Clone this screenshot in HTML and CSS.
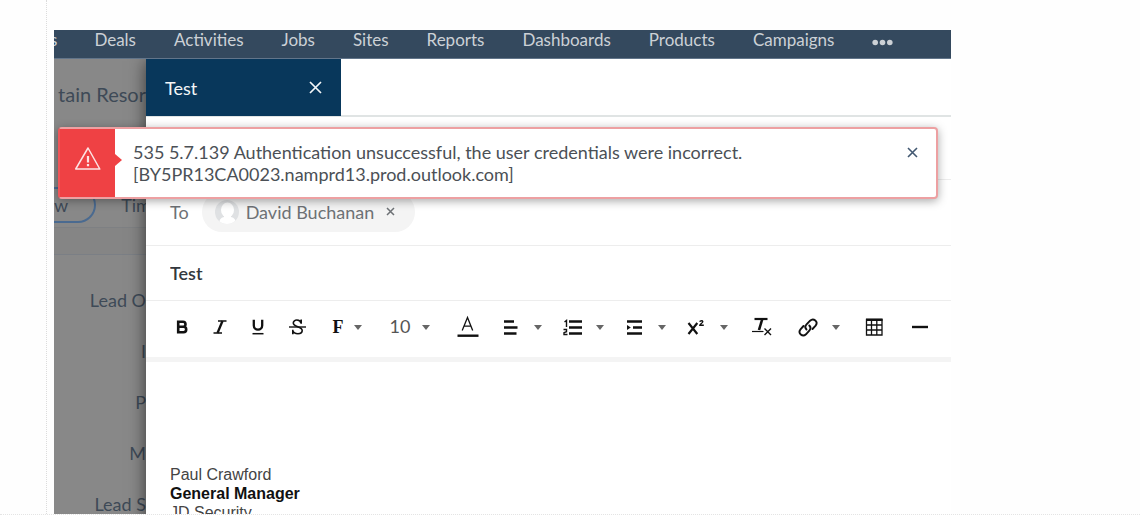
FILE: index.html
```html
<!DOCTYPE html>
<html lang="en">
<head>
<meta charset="utf-8">
<title>Compose email</title>
<link rel="stylesheet" href="styles.css">
</head>
<body>
<div class="page">
  <div class="gutter"></div>
  <div class="app">
    <nav class="nav">
      <a href="#">s</a>
      <a href="#">Deals</a>
      <a href="#">Activities</a>
      <a href="#">Jobs</a>
      <a href="#">Sites</a>
      <a href="#">Reports</a>
      <a href="#">Dashboards</a>
      <a href="#">Products</a>
      <a href="#">Campaigns</a>
      <button class="more" type="button" aria-label="More">
        <svg width="21" height="7" viewBox="0 0 21 7" fill="currentColor"><circle cx="3.2" cy="3.5" r="2.8"/><circle cx="10.5" cy="3.5" r="2.8"/><circle cx="17.8" cy="3.5" r="2.8"/></svg>
      </button>
    </nav>
    <div class="workspace">
      <aside class="record">
        <div class="record-title">tain Resor</div>
        <div class="record-tabs">
          <button class="pill" type="button">w</button>
          <a class="tab-link" href="#">Tim</a>
        </div>
        <div class="record-band"></div>
        <div class="record-fields">
          <span>Lead O</span>
          <span>I</span>
          <span>P</span>
          <span>M</span>
          <span>Lead S</span>
        </div>
      </aside>
      <main class="composer">
        <div class="tabs">
          <div class="tab">
            <span>Test</span>
            <button type="button" aria-label="Close tab">
              <svg width="13" height="13" viewBox="0 0 13 13" fill="none" stroke="currentColor" stroke-width="1.7"><path d="M1 1l11 11M12 1L1 12"/></svg>
            </button>
          </div>
        </div>
        <div class="row from"></div>
        <div class="row to">
          <span class="row-label">To</span>
          <span class="chip">
            <svg width="24" height="24" viewBox="0 0 24 24"><defs><clipPath id="face"><circle cx="12" cy="12" r="12"/></clipPath></defs><circle cx="12" cy="12" r="12" fill="#dfe1e3"/><g fill="#fff" clip-path="url(#face)"><ellipse cx="12.500" cy="10" rx="6.500" ry="7.500"/><path d="M9 14h7v3q5 1 5 7H4q0-6 5-7z"/></g></svg>
            <span>David Buchanan</span>
            <button type="button" aria-label="Remove David Buchanan">
              <svg width="9" height="9" viewBox="0 0 9 9" fill="none" stroke="currentColor" stroke-width="1.5"><path d="M1 1l7 7M8 1L1 8"/></svg>
            </button>
          </span>
        </div>
        <input class="subject" type="text" value="Test" aria-label="Subject">
        <div class="toolbar">
          <div class="group tight">
            <button type="button" aria-label="Bold"><svg width="24" height="24" viewBox="0 0 24 24" fill="none" stroke="currentColor" stroke-width="2.6"><path d="M8.200 6.800h4.800a2.400 2.400 0 0 1 0 5H8.200zM8.200 11.800h5.300a2.700 2.700 0 0 1 0 5.400H8.200z"/></svg></button>
            <button type="button" aria-label="Italic"><svg width="24" height="24" viewBox="0 0 24 24" fill="none" stroke="currentColor"><path d="M10 6h8.500M5.500 18h8.500" stroke-width="1.4"/><path d="M14.500 6l-5 12" stroke-width="2.3"/></svg></button>
            <button type="button" aria-label="Underline"><svg width="24" height="24" viewBox="0 0 24 24" fill="none" stroke="currentColor"><path d="M7.800 4.800v5.700a4.200 4.200 0 0 0 8.400 0V4.800" stroke-width="2.300"/><path d="M6.500 18.700h11" stroke-width="1.500"/></svg></button>
            <button type="button" aria-label="Strikethrough"><svg width="24" height="24" viewBox="0 0 24 24" fill="none" stroke="currentColor"><path d="M17.200 4.500v4.300M17 8.200C16.300 4 9.300 4 9.300 8.100c0 4.300 8.900 3.200 8.900 7.500 0 4.200-8.200 4-9.400.2M8.800 14.700v4.600" stroke-width="1.600"/><path d="M5 12h17" stroke-width="1.400"/></svg></button>
          </div>
          <div class="group wide">
            <button class="font" type="button" aria-label="Font"><span class="serif">F</span><svg width="8" height="5" viewBox="0 0 8 5" fill="#666"><path d="M0 0h8L4 5z"/></svg></button>
            <label class="size"><select aria-label="Font size"><option>10</option></select><svg width="8" height="5" viewBox="0 0 8 5" fill="#666"><path d="M0 0h8L4 5z"/></svg></label>
            <button type="button" aria-label="Text color"><svg width="24" height="24" viewBox="0 0 24 24" fill="none" stroke="currentColor"><path d="M6.200 15.500L11.500 2.500l5.200 13M8 11.200h7" stroke-width="1.300"/><path d="M1.500 20.700h21" stroke-width="2.400"/></svg></button>
          </div>
          <div class="group">
            <button class="split" type="button" aria-label="Align"><svg width="24" height="24" viewBox="0 0 24 24" fill="none" stroke="currentColor" stroke-width="2.400"><path d="M6 6.500h10M6 12.500h13.500M6 18.500h12.500"/></svg><svg width="8" height="5" viewBox="0 0 8 5" fill="#666"><path d="M0 0h8L4 5z"/></svg></button>
            <button class="split" type="button" aria-label="Numbered list"><svg width="24" height="24" viewBox="0 0 24 24" fill="none" stroke="currentColor"><path d="M9 6.500h13M9 12.500h13M9 18.500h13" stroke-width="2.400"/><path d="M4.500 7L6.500 5.500v6.500M3.500 14.500h3v2.200l-2.500 1v1.800h3.500" stroke-width="1.400"/></svg><svg width="8" height="5" viewBox="0 0 8 5" fill="#666"><path d="M0 0h8L4 5z"/></svg></button>
            <button class="split" type="button" aria-label="Indent"><svg width="24" height="24" viewBox="0 0 24 24" fill="none" stroke="currentColor" stroke-width="2.400"><path d="M5 6.500h15M11 12.500h9M5 18.500h15"/><path d="M5 10L8.800 12.500 5 15z" fill="currentColor" stroke="none"/></svg><svg width="8" height="5" viewBox="0 0 8 5" fill="#666"><path d="M0 0h8L4 5z"/></svg></button>
            <button class="split" type="button" aria-label="Superscript"><svg width="24" height="24" viewBox="0 0 24 24" fill="none" stroke="currentColor"><path d="M4.500 8l8.800 11M13.300 8L4.500 19" stroke-width="2.200"/><path d="M15.500 6.500q2.800-1.500 3.300 0c.3 1.500-3 2.300-3 3.800h4" stroke-width="1.400"/></svg><svg width="8" height="5" viewBox="0 0 8 5" fill="#666"><path d="M0 0h8L4 5z"/></svg></button>
          </div>
          <div class="group loose">
            <button type="button" aria-label="Clear formatting"><svg width="24" height="24" viewBox="0 0 24 24" fill="none" stroke="currentColor"><path d="M4.500 4h13" stroke-width="2.200"/><path d="M12.300 4L9 15" stroke-width="2.600"/><path d="M2 16.500h11.500" stroke-width="1.200"/><path d="M14.500 13.500l6.500 6.500M21 13.500L14.500 20" stroke-width="1.400"/></svg></button>
            <button class="split" type="button" aria-label="Link"><svg width="24" height="24" viewBox="0 0 24 24" fill="none" stroke="currentColor" stroke-width="1.900" stroke-linecap="round"><path d="M10.500 14.500c-1.800-1.800-1.500-3.500-.2-4.800l3.800-4c3.500-3.200 8.500 1.200 5.500 5L16.500 14"/><path d="M13.300 10.500c1.800 1.800 1.500 3.500.2 4.800L10 19.300c-3.500 3.200-8.500-1.200-5.500-5L7.500 11"/></svg><svg width="8" height="5" viewBox="0 0 8 5" fill="#666"><path d="M0 0h8L4 5z"/></svg></button>
            <button type="button" aria-label="Table"><svg width="24" height="24" viewBox="0 0 24 24" fill="none" stroke="currentColor" stroke-width="1.300"><path d="M4.500 4.500h15.500v15.500H4.500zM4.500 10h15.500M4.500 15h15.500M9.500 6v14M14.800 6v14"/><path d="M4 4.800h16.500" stroke-width="2.400"/></svg></button>
            <button type="button" aria-label="Horizontal line"><svg width="24" height="24" viewBox="0 0 24 24" fill="none" stroke="currentColor" stroke-width="2.400"><path d="M4 12h16"/></svg></button>
          </div>
        </div>
        <div class="message">
          <div>Paul Crawford</div>
          <strong>General Manager</strong>
          <div>JD Security</div>
        </div>
      </main>
      <div class="alert" role="alert">
        <div class="alert-icon">
          <svg width="28" height="26" viewBox="0 0 28 26" fill="none" stroke="currentColor"><path d="M14 2L25.800 23H1.700z" stroke-width="1.500" stroke-linejoin="round"/><path d="M14 10v6.500M14 18v2.200" stroke-width="2.200"/></svg>
        </div>
        <p>535 5.7.139 Authentication unsuccessful, the user credentials were incorrect.<br>[BY5PR13CA0023.namprd13.prod.outlook.com]</p>
        <button type="button" aria-label="Dismiss">
          <svg width="11" height="11" viewBox="0 0 11 11" fill="none" stroke="currentColor" stroke-width="1.600"><path d="M1 1l9 9M10 1l-9 9"/></svg>
        </button>
      </div>
    </div>
  </div>
</div>
</body>
</html>
```
FILE: styles.css
```css
* { box-sizing: border-box; }
body {
  margin: 0;
  background: #fefefe;
  font-family: Lato, "Liberation Sans", sans-serif;
  font-size: 18px;
  color: #4b5056;
}
a { color: inherit; text-decoration: none; }
svg { display: block; flex: none; }
button {
  border: 0;
  padding: 0;
  background: none;
  color: inherit;
  font: inherit;
}
.page {
  display: grid;
  grid-template-columns: 47px 1fr;
  column-gap: 7px;
  height: 100vh;
  padding-right: 189px;
  border-bottom: 1px dotted #e4e4e4;
}
.gutter { border-right: 1px dotted #dcdcdc; }
.app {
  display: flex;
  flex-direction: column;
  margin-top: 30px;
  min-width: 0;
  overflow: hidden;
}
.nav {
  position: relative;
  z-index: 1;
  display: flex;
  gap: 38px;
  height: 29px;
  flex: none;
  margin-left: -4px;
  background: #34495e;
  border-bottom: 1px solid #62758a;
  color: #ccd1d6;
  font-size: 17px;
  line-height: 20px;
}
.nav a:first-child { margin-right: -1px; }
.more { align-self: flex-start; padding-top: 9px; }
.workspace {
  position: relative;
  display: grid;
  grid-template-columns: 92px 1fr;
  flex: 1;
  min-height: 0;
}
.record {
  background: #888;
  color: #3e4a57;
  overflow: hidden;
  white-space: nowrap;
}
.record-title {
  display: flex;
  justify-content: flex-end;
  height: 128px;
  padding-top: 23px;
  font-size: 20px;
  line-height: 24px;
}
.record-tabs {
  display: flex;
  gap: 25px;
  height: 41px;
  border-bottom: 1px solid #7e8083;
}
.pill {
  width: 43px;
  height: 36px;
  padding-right: 26px;
  border: 2px solid #4a6a90;
  border-left: 0;
  border-radius: 0 18px 18px 0;
  text-align: right;
}
.tab-link { line-height: 36px; }
.record-band { height: 27px; border-bottom: 1px solid #7b7f85; background: #858585; }
.record-fields {
  display: grid;
  grid-auto-rows: 51px;
  justify-items: end;
  padding-top: 20px;
  line-height: 51px;
}
.composer {
  display: flex;
  flex-direction: column;
  min-width: 0;
  background: #fff;
  box-shadow: 0 2px 16px rgba(0, 0, 0, 0.6);
}
.tabs { height: 58px; border-bottom: 2px solid #e0e4e4; }
.tab {
  display: flex;
  align-items: center;
  justify-content: space-between;
  width: 195px;
  height: 57px;
  padding: 0 19px;
  background: #08375b;
  color: #f4f6f8;
  line-height: 24px;
}
.row {
  display: flex;
  align-items: center;
  padding-left: 24px;
  border-bottom: 1px solid #ededed;
}
.from { height: 63px; }
.to { height: 66px; gap: 13px; padding-bottom: 2px; color: #6d7175; }
.chip {
  display: flex;
  align-items: center;
  gap: 7px;
  height: 40px;
  padding: 0 20px 0 13px;
  border-radius: 20px;
  background: #f4f4f4;
}
.chip button { margin-left: 5px; }
.subject {
  width: 100%;
  height: 55px;
  padding: 0 24px;
  border: 0;
  border-bottom: 1px solid #ededed;
  background: #fff;
  color: #33383d;
  font: 600 18px Lato, "Liberation Sans", sans-serif;
}
.toolbar {
  display: flex;
  align-items: center;
  gap: 18px;
  height: 61px;
  padding: 0 20px 4px 24px;
  border-bottom: 5px solid #f4f4f4;
  color: #111;
}
.group { display: flex; align-items: center; gap: 18px; }
.tight { gap: 14px; }
.wide { gap: 26px; }
.loose { gap: 22px; padding-left: 4px; }
.split { display: flex; align-items: center; gap: 12px; }
.font { display: flex; align-items: center; gap: 4px; }
.serif {
  width: 24px;
  font: 700 18px "Liberation Serif", serif;
  text-align: center;
}
.size { display: flex; align-items: center; gap: 10px; }
.size select {
  appearance: none;
  width: 24px;
  padding: 0 0 3px;
  border: 0;
  background: none;
  color: #555;
  font: 18px Lato, "Liberation Sans", sans-serif;
  text-align: center;
}
.message {
  padding: 103px 24px 0;
  color: #444;
  font: 16px/19px "Liberation Sans", Arial, sans-serif;
}
.message strong { color: #111; }
.alert {
  position: absolute;
  top: 68px;
  left: 4px;
  right: 13px;
  display: flex;
  min-height: 72px;
  border: 2px solid #eda0a2;
  border-left-color: #ef5558;
  border-radius: 4px;
  background: #fff;
  box-shadow: 0 2px 10px rgba(0, 0, 0, 0.35);
}
.alert-icon {
  position: relative;
  display: flex;
  align-items: center;
  justify-content: center;
  width: 55px;
  padding-bottom: 9px;
  background: #ef4144;
  color: #fde4e4;
}
.alert-icon::after {
  content: "";
  position: absolute;
  top: 25px;
  left: 100%;
  border: 6px solid transparent;
  border-left: 7px solid #ef4144;
  border-right: 0;
}
.alert p { flex: 1; margin: 0; padding: 12px 0 12px 18px; line-height: 22px; }
.alert button { align-self: flex-start; padding: 18px 18px 0 0; color: #425871; }
```
